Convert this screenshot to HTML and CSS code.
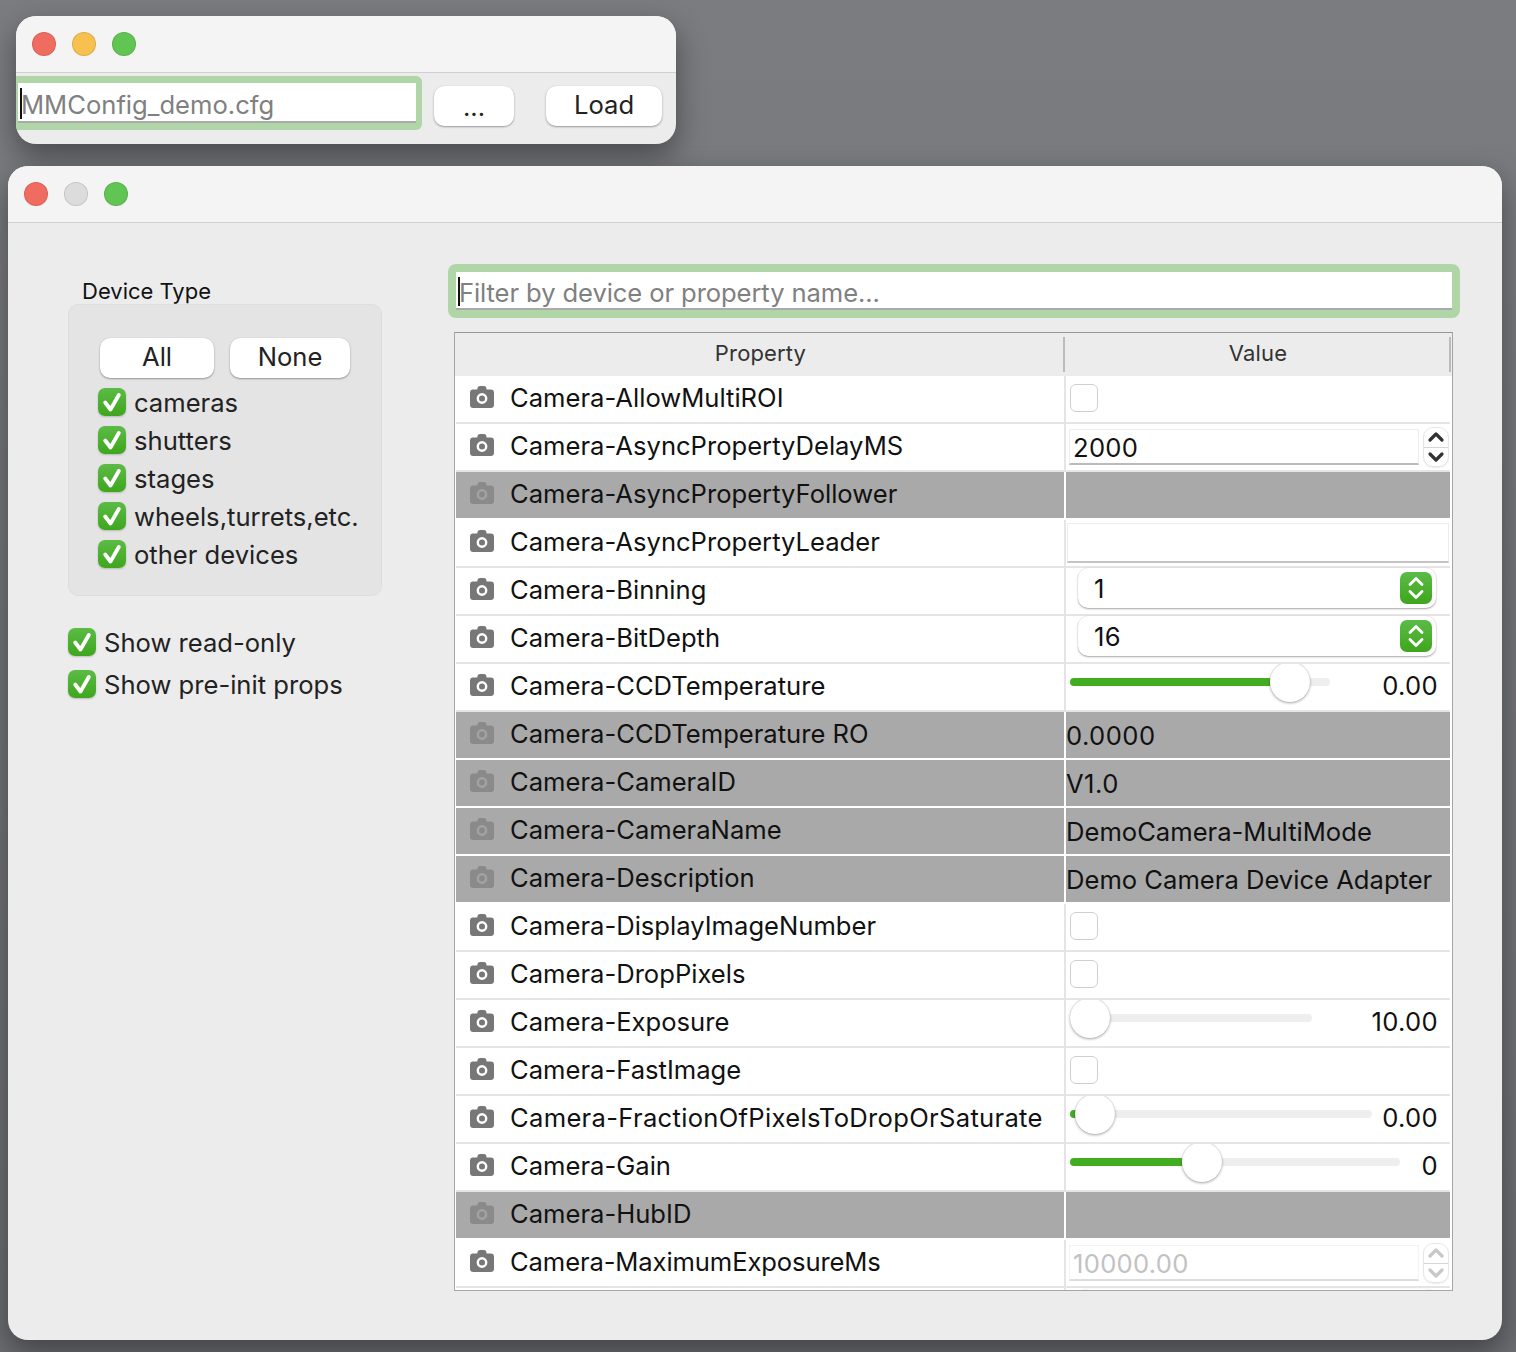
FILE: index.html
```html
<!DOCTYPE html>
<html lang="en">
<head>
<meta charset="utf-8">
<title>Micro-Manager property browser</title>
<link rel="stylesheet" href="styles.css">
</head>
<body>
<svg class="defs" width="0" height="0" aria-hidden="true">
  <symbol id="cam" viewBox="0 0 24 22">
    <path class="cam-body" d="M7.500 2.200C7.800.9 8.600 0 10 0h4c1.300 0 2.100.9 2.400 2.200l.3 1.300H21c1.700 0 3 1.300 3 3V19c0 1.700-1.300 3-3 3H3c-1.700 0-3-1.300-3-3V6.500c0-1.700 1.300-3 3-3h4.200z"/>
    <circle class="cam-ring" cx="12" cy="12.500" r="4.200"/>
  </symbol>
  <symbol id="check" viewBox="0 0 28 28">
    <path d="M7.200 14.500l5.300 7 8.300-14.500" fill="none" stroke="#fff" stroke-width="3.800" stroke-linecap="round" stroke-linejoin="round"/>
  </symbol>
  <symbol id="updown" viewBox="0 0 32 32">
    <path d="M10 12.500l6-6 6 6M10 19.500l6 6 6-6" fill="none" stroke="#fff" stroke-width="2.800" stroke-linecap="round" stroke-linejoin="round"/>
  </symbol>
  <symbol id="spinarrows" viewBox="0 0 26 40">
    <path d="M7 13l6-6 6 6M7 27l6 6 6-6" fill="none" stroke="currentColor" stroke-width="3.200" stroke-linecap="round" stroke-linejoin="round"/>
  </symbol>
</svg>

<div class="desktop">
  <section class="window win-load">
    <header class="titlebar">
      <span class="light red"></span><span class="light yellow"></span><span class="light green"></span>
    </header>
    <div class="load-body">
      <div class="ring ring-load"><div class="field"><i class="caret"></i><span class="placeholder">MMConfig_demo.cfg</span></div></div>
      <button class="btn btn-dots">...</button>
      <button class="btn btn-load">Load</button>
    </div>
  </section>

  <section class="window win-props">
    <header class="titlebar">
      <span class="light red"></span><span class="light grey"></span><span class="light green"></span>
    </header>
    <div class="props-body">
      <aside class="sidebar">
        <div class="group-title">Device Type</div>
        <div class="group">
          <div class="group-btns"><button class="btn btn-all">All</button><button class="btn btn-none">None</button></div>
          <label class="chk"><svg class="tick"><use href="#check"/></svg>cameras</label>
          <label class="chk"><svg class="tick"><use href="#check"/></svg>shutters</label>
          <label class="chk"><svg class="tick"><use href="#check"/></svg>stages</label>
          <label class="chk"><svg class="tick"><use href="#check"/></svg>wheels,turrets,etc.</label>
          <label class="chk"><svg class="tick"><use href="#check"/></svg>other devices</label>
        </div>
        <div class="options">
          <label class="chk"><svg class="tick"><use href="#check"/></svg>Show read-only</label>
          <label class="chk"><svg class="tick"><use href="#check"/></svg>Show pre-init props</label>
        </div>
      </aside>

      <main class="main">
        <div class="ring ring-filter"><div class="field"><i class="caret"></i><span class="placeholder">Filter by device or property name...</span></div></div>
        <div class="table">
          <div class="thead"><div class="th th-prop">Property</div><div class="th th-val">Value</div></div>

          <div class="row"><div class="name"><svg class="cam"><use href="#cam"/></svg>Camera-AllowMultiROI</div><div class="val"><span class="box"></span></div></div>
          <div class="row"><div class="name"><svg class="cam"><use href="#cam"/></svg>Camera-AsyncPropertyDelayMS</div><div class="val val-spin"><div class="edit">2000</div><div class="spin"><svg class="spin-ico"><use href="#spinarrows"/></svg></div></div></div>
          <div class="row ro"><div class="name"><svg class="cam"><use href="#cam"/></svg>Camera-AsyncPropertyFollower</div><div class="val"></div></div>
          <div class="row"><div class="name"><svg class="cam"><use href="#cam"/></svg>Camera-AsyncPropertyLeader</div><div class="val val-edit"><div class="edit edit-full"></div></div></div>
          <div class="row"><div class="name"><svg class="cam"><use href="#cam"/></svg>Camera-Binning</div><div class="val val-combo"><div class="combo"><span>1</span><svg class="ind"><use href="#updown"/></svg></div></div></div>
          <div class="row"><div class="name"><svg class="cam"><use href="#cam"/></svg>Camera-BitDepth</div><div class="val val-combo"><div class="combo"><span>16</span><svg class="ind"><use href="#updown"/></svg></div></div></div>
          <div class="row"><div class="name"><svg class="cam"><use href="#cam"/></svg>Camera-CCDTemperature</div><div class="val val-slider"><div class="track" style="width:260px"><div class="fill" style="width:200px"></div><div class="handle" style="left:200px"></div></div><span class="num">0.00</span></div></div>
          <div class="row ro"><div class="name"><svg class="cam"><use href="#cam"/></svg>Camera-CCDTemperature RO</div><div class="val val-text val-num">0.0000</div></div>
          <div class="row ro"><div class="name"><svg class="cam"><use href="#cam"/></svg>Camera-CameraID</div><div class="val val-text val-num">V1.0</div></div>
          <div class="row ro"><div class="name"><svg class="cam"><use href="#cam"/></svg>Camera-CameraName</div><div class="val val-text">DemoCamera-MultiMode</div></div>
          <div class="row ro"><div class="name"><svg class="cam"><use href="#cam"/></svg>Camera-Description</div><div class="val val-text">Demo Camera Device Adapter</div></div>
          <div class="row"><div class="name"><svg class="cam"><use href="#cam"/></svg>Camera-DisplayImageNumber</div><div class="val"><span class="box"></span></div></div>
          <div class="row"><div class="name"><svg class="cam"><use href="#cam"/></svg>Camera-DropPixels</div><div class="val"><span class="box"></span></div></div>
          <div class="row"><div class="name"><svg class="cam"><use href="#cam"/></svg>Camera-Exposure</div><div class="val val-slider"><div class="track" style="width:242px"><div class="handle" style="left:0"></div></div><span class="num">10.00</span></div></div>
          <div class="row"><div class="name"><svg class="cam"><use href="#cam"/></svg>Camera-FastImage</div><div class="val"><span class="box"></span></div></div>
          <div class="row"><div class="name name-wide"><svg class="cam"><use href="#cam"/></svg>Camera-FractionOfPixelsToDropOrSaturate</div><div class="val val-slider"><div class="track" style="width:302px"><div class="fill" style="width:10px"></div><div class="handle" style="left:5px"></div></div><span class="num">0.00</span></div></div>
          <div class="row"><div class="name"><svg class="cam"><use href="#cam"/></svg>Camera-Gain</div><div class="val val-slider"><div class="track" style="width:330px"><div class="fill" style="width:112px"></div><div class="handle" style="left:112px"></div></div><span class="num">0</span></div></div>
          <div class="row ro"><div class="name"><svg class="cam"><use href="#cam"/></svg>Camera-HubID</div><div class="val"></div></div>
          <div class="row"><div class="name name-tight"><svg class="cam"><use href="#cam"/></svg>Camera-MaximumExposureMs</div><div class="val val-spin disabled"><div class="edit">10000.00</div><div class="spin"><svg class="spin-ico"><use href="#spinarrows"/></svg></div></div></div>
          <div class="row"><div class="name"></div><div class="val val-combo"><div class="combo combo-cut"></div></div></div>
        </div>
      </main>
    </div>
  </section>
</div>
</body>
</html>
```

FILE: styles.css
```css
* { box-sizing: border-box; }
html, body { margin: 0; padding: 0; }
body {
  width: 1516px;
  height: 1352px;
  overflow: hidden;
  font-family: Inter, "Liberation Sans", sans-serif;
  font-size: 25.600px;
  color: #111;
}
.defs { position: absolute; }
.desktop {
  position: relative;
  width: 1516px;
  height: 1352px;
  background: linear-gradient(#7b7c80, #6c6d71);
  overflow: hidden;
}
.window {
  position: absolute;
  background: #ececec;
  border-radius: 20px;
  overflow: hidden;
  box-shadow: 0 12px 30px rgba(0, 0, 0, .4);
}
.win-load { left: 16px; top: 16px; width: 660px; height: 128px; }
.win-props { left: 8px; top: 166px; width: 1494px; height: 1174px; }
.titlebar {
  height: 57px;
  padding-left: 16px;
  display: flex;
  align-items: center;
  gap: 16px;
  background: #f4f4f4;
  border-bottom: 1px solid #d0d0d0;
}
.titlebar .light { width: 24px; height: 24px; border-radius: 50%; border: 1px solid rgba(0, 0, 0, .1); margin-bottom: 1px; }
.red { background: #f16c60; }
.yellow { background: #f7c04f; }
.green { background: #61c554; }
.grey { background: #dcdcdc; }

.btn {
  font: inherit;
  color: #222;
  height: 40px;
  padding: 0 0 4px;
  background: #fff;
  border: 0;
  border-radius: 10px;
  box-shadow: 0 1px 2px rgba(0, 0, 0, .35), 0 0 1px rgba(0, 0, 0, .15);
}
.ring {
  background: #b0d5a6;
  border-radius: 6px;
}
.field {
  position: relative;
  height: 100%;
  background: #fff;
  border-bottom: 2px solid #ababab;
  display: flex;
  align-items: center;
  overflow: hidden;
}
.placeholder { color: #808080; white-space: nowrap; padding: 4px 0 0 3px; }
.ring-filter .placeholder { letter-spacing: -.1px; }
.caret { position: absolute; left: 2px; top: 5px; bottom: 2px; width: 2px; background: #111; }

.load-body { display: flex; align-items: flex-start; height: 71px; }
.ring-load { width: 406px; height: 54px; margin-top: 3px; padding: 7px 6px 7px 2px; border-radius: 0 6px 6px 0; }
.btn-dots { width: 80px; margin: 13px 0 0 12px; padding: 0; }
.btn-load { width: 116px; margin: 13px 0 0 32px; }

.props-body { display: flex; height: 1117px; padding: 41px 0 0 60px; }
.sidebar { width: 314px; margin-right: 66px; }
.group-title { font-size: 22px; line-height: 26px; padding: 14px 0 0 14px; height: 40px; }
.group {
  height: 292px;
  background: #e4e4e4;
  border: 1px solid #dedede;
  border-radius: 10px;
  padding: 33px 0 0 29px;
}
.group-btns { display: flex; gap: 16px; padding-left: 2px; margin-bottom: 5px; }
.btn-all { width: 114px; }
.btn-none { width: 120px; }
.chk { display: flex; align-items: center; gap: 8px; height: 38px; color: #222; white-space: nowrap; }
.tick {
  width: 28px;
  height: 28px;
  flex: none;
  border-radius: 7px;
  background: linear-gradient(#5cbb46, #3ea61d);
  box-shadow: 0 1px 2px rgba(0, 0, 0, .2);
}
.options { margin-top: 27px; display: flex; flex-direction: column; gap: 4px; }

.main { width: 1012px; }
.ring-filter { height: 54px; padding: 8px; border-radius: 8px; }
.table {
  width: 999px;
  height: 959px;
  margin: 14px 0 0 6px;
  padding: 0 1px;
  background: #fff;
  border: 1px solid #a6a6a6;
  border-top-color: #969696;
  overflow: hidden;
}
.thead { display: grid; grid-template-columns: 609px 386px; height: 43px; background: #ececec; margin: 0 -1px; padding-left: 1px; }
.th { position: relative; display: flex; align-items: center; justify-content: center; font-size: 22px; letter-spacing: .15px; color: #333; padding-bottom: 4px; }
.th::after { content: ""; position: absolute; right: 0; top: 4px; bottom: 4px; width: 2px; background: #bcbcbc; }
.row {
  display: grid;
  grid-template-columns: 608px 2px 384px;
  height: 48px;
  width: 994px;
  background: #fff;
}
.name {
  grid-column: 1;
  display: flex;
  align-items: center;
  gap: 16px;
  padding: 0 0 4px 14px;
  white-space: nowrap;
  border-bottom: 2px solid #e5e5e5;
}
.name-wide { letter-spacing: .3px; }
.name-tight { letter-spacing: -.12px; }
.val {
  grid-column: 3;
  position: relative;
  display: flex;
  align-items: center;
  border-bottom: 2px solid #e5e5e5;
  min-width: 0;
}
.row::before { content: ""; grid-column: 2; grid-row: 1; background: #e5e5e5; }
.cam { --cam: #777; --ring: #fff; width: 24px; height: 22px; flex: none; }
.ro .cam { --cam: #8a8a8a; --ring: #a2a2a2; }
.ro .name, .ro .val { background: #a9a9a9; border-bottom-color: #fff; }
.ro::before { background: #fff; }
.cam-body { fill: var(--cam); }
.cam-ring { fill: var(--cam); stroke: var(--ring); stroke-width: 2.400; }
.box {
  width: 28px;
  height: 28px;
  margin: 0 0 2px 4px;
  background: #fff;
  border: 1px solid #cfcfcf;
  border-radius: 6px;
}
.val-text { color: #111; white-space: nowrap; overflow: hidden; }
.val-num { letter-spacing: .45px; }
.edit {
  height: 36px;
  background: #fff;
  border: 1px solid #eee;
  border-bottom: 2px solid #bbb;
  padding-left: 3px;
  line-height: 35px;
  letter-spacing: .3px;
}
.val-spin { padding: 0 1px 0 3px; gap: 4px; }
.val-spin .edit { width: 350px; }
.spin {
  width: 26px;
  height: 40px;
  border: 1px solid #e6e6e6;
  border-radius: 10px;
  position: relative;
  color: #333;
  box-shadow: 0 1px 1px rgba(0, 0, 0, .08);
}
.spin::after { content: ""; position: absolute; left: 0; right: 0; top: 19px; height: 1px; background: #d6d6d6; }
.spin-ico { position: absolute; left: -1px; top: -1px; width: 26px; height: 40px; }
.disabled .edit { color: #c2c2c2; border-color: #f3f3f3; border-bottom-color: #ddd; }
.disabled .spin { color: #c8c8c8; }
.val-edit { padding: 0 1px; }
.edit-full { width: 100%; height: 40px; border-color: #ececec; border-bottom-color: #c4c4c4; }
.val-combo { padding-left: 12px; }
.combo {
  position: relative;
  width: 358px;
  height: 40px;
  margin-top: -6px;
  padding-left: 16px;
  display: flex;
  align-items: center;
  background: #fff;
  border-radius: 10px;
  letter-spacing: .3px;
  box-shadow: 0 1px 2px rgba(0, 0, 0, .35), 0 0 1px rgba(0, 0, 0, .15);
}
.ind {
  position: absolute;
  right: 4px;
  top: 4px;
  width: 32px;
  height: 32px;
  border-radius: 7px;
  background: linear-gradient(#5cbb46, #3ea61d);
}
.combo-cut { align-self: flex-start; margin-top: 1px; }
.val-slider { padding: 0 12px 0 4px; justify-content: space-between; overflow: hidden; }
.track {
  position: relative;
  height: 8px;
  margin-bottom: 10px;
  border-radius: 4px;
  background: #eee;
}
.fill { height: 8px; border-radius: 4px 0 0 4px; background: #43ad22; }
.handle {
  position: absolute;
  top: -16px;
  width: 40px;
  height: 40px;
  border-radius: 50%;
  background: #fff;
  box-shadow: 0 1px 3px rgba(0, 0, 0, .35), 0 0 1px rgba(0, 0, 0, .2);
}
.num { padding-bottom: 4px; letter-spacing: .3px; }
```
